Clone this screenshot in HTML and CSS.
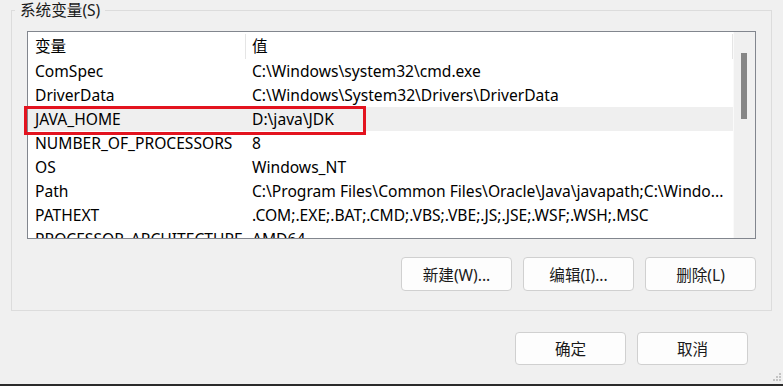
FILE: index.html
```html
<!DOCTYPE html>
<html lang="zh-CN">
<head>
<meta charset="utf-8">
<title>系统变量</title>
<link rel="stylesheet" href="styles.css">
</head>
<body>
<div class="dialog">
  <fieldset class="group">
    <legend class="group-title">系统变量(S)</legend>
    <div class="listview">
      <div class="list-main">
        <div class="row head">
          <div class="cell c1">变量</div>
          <div class="cell c2">值</div>
        </div>
        <div class="rows">
          <div class="row"><div class="cell c1">ComSpec</div><div class="cell c2">C:\Windows\system32\cmd.exe</div></div>
          <div class="row"><div class="cell c1">DriverData</div><div class="cell c2">C:\Windows\System32\Drivers\DriverData</div></div>
          <div class="row selected"><div class="cell c1">JAVA_HOME</div><div class="cell c2">D:\java\JDK</div></div>
          <div class="row"><div class="cell c1">NUMBER_OF_PROCESSORS</div><div class="cell c2">8</div></div>
          <div class="row"><div class="cell c1">OS</div><div class="cell c2">Windows_NT</div></div>
          <div class="row"><div class="cell c1">Path</div><div class="cell c2">C:\Program Files\Common Files\Oracle\Java\javapath;C:\Windo...</div></div>
          <div class="row"><div class="cell c1">PATHEXT</div><div class="cell c2">.COM;.EXE;.BAT;.CMD;.VBS;.VBE;.JS;.JSE;.WSF;.WSH;.MSC</div></div>
          <div class="row"><div class="cell c1">PROCESSOR_ARCHITECTURE</div><div class="cell c2">AMD64</div></div>
        </div>
      </div>
      <div class="scrollbar"><div class="thumb"></div></div>
      <div class="highlight"></div>
    </div>
    <div class="btn-row group-btns">
      <button class="btn">新建(W)...</button>
      <button class="btn">编辑(I)...</button>
      <button class="btn">删除(L)</button>
    </div>
  </fieldset>
  <div class="btn-row footer-btns">
    <button class="btn">确定</button>
    <button class="btn">取消</button>
  </div>
  <div class="spacer"></div>
  <div class="edge"></div>
  <svg class="grip" width="12" height="12" viewBox="0 0 12 12">
    <rect x="8" y="2" width="2" height="2" fill="#c4c4c4"/>
    <rect x="5" y="5" width="2" height="2" fill="#c4c4c4"/>
    <rect x="8" y="5" width="2" height="2" fill="#c4c4c4"/>
    <rect x="2" y="8" width="2" height="2" fill="#c4c4c4"/>
    <rect x="5" y="8" width="2" height="2" fill="#c4c4c4"/>
    <rect x="8" y="8" width="2" height="2" fill="#c4c4c4"/>
  </svg>
</div>
</body>
</html>
```

FILE: styles.css
```css
* { box-sizing: border-box; }
html, body {
  margin: 0;
  padding: 0;
  background: #f0f0f0;
}
body {
  font-family: "Noto Sans", "Noto Sans CJK SC", sans-serif;
  font-size: 15.6px;
  color: #000;
}
.dialog {
  position: relative;
  width: 783px;
  height: 386px;
  display: flex;
  flex-direction: column;
  overflow: hidden;
}
.group {
  margin: 0 0 0 11px;
  padding: 0 0 19px 0;
  width: 761px;
  min-inline-size: 0;
  border: 1px solid #dcdcdc;
}
.group-title {
  margin-left: 3px;
  padding: 0 5px;
  height: 20px;
  line-height: 20px;
  font-size: 15.6px;
  color: #1a1a1a;
}
.listview {
  position: relative;
  margin: 11px 0 0 15px;
  width: 729px;
  height: 208px;
  border: 1px solid #82868e;
  background: #fff;
  display: flex;
}
.list-main {
  flex: 1;
  overflow: hidden;
}
.row {
  display: flex;
  height: 24px;
  align-items: center;
  white-space: nowrap;
}
.row.head {
  height: 27px;
}
.row.selected {
  background: #efefef;
}
.cell {
  padding-left: 7px;
  overflow: hidden;
}
.c1 { width: 217px; flex: none; }
.c2 { flex: 1; }
.head .cell {
  height: 25px;
  line-height: 25px;
  margin-top: 1px;
}
.head .c2 {
  border-left: 1px solid #e5e5e5;
  border-right: 1px solid #e5e5e5;
  padding-left: 6px;
}
.scrollbar {
  width: 22px;
  flex: none;
  background: #f0f0f0;
  border-left: 1px solid #fafafa;
  padding: 21px 0 0 7px;
}
.thumb {
  width: 6px;
  height: 66px;
  background: #868686;
}
.highlight {
  position: absolute;
  left: -4px;
  top: 74px;
  width: 342px;
  height: 29px;
  border: 3px solid #e3131f;
}
.btn-row {
  display: flex;
  justify-content: flex-end;
  gap: 11px;
}
.group-btns {
  margin-top: 18px;
  padding-right: 15px;
}
.btn {
  width: 111px;
  height: 34px;
  background: #fdfdfd;
  border: 1px solid #d0d0d0;
  border-radius: 4px;
  font-family: "Noto Sans", "Noto Sans CJK SC", sans-serif;
  font-size: 15.6px;
  color: #1a1a1a;
  padding: 0;
}
.footer-btns {
  margin-top: 21px;
  padding-right: 35px;
}
.footer-btns .btn {
  height: 33px;
}
.spacer { flex: 1; }
.edge {
  height: 2px;
  background: #2b2b2b;
  flex: none;
}
.grip {
  position: absolute;
  right: 0;
  bottom: 3px;
}
```
